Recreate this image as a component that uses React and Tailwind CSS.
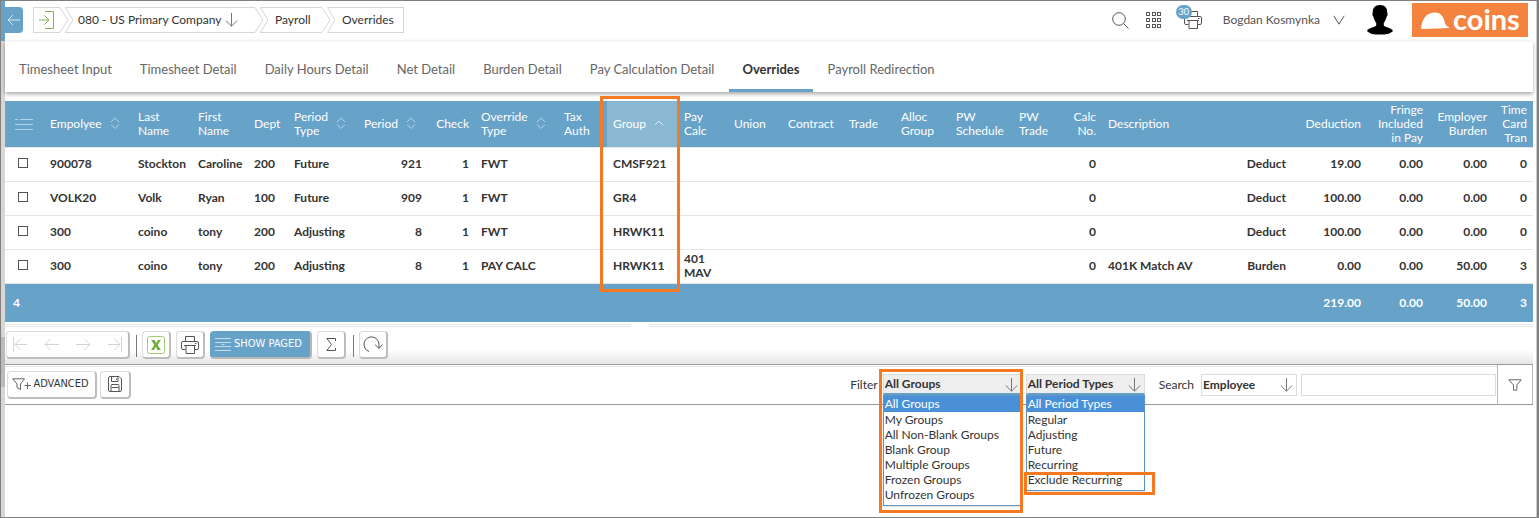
import React from "react";

const tabs = [
  "Timesheet Input",
  "Timesheet Detail",
  "Daily Hours Detail",
  "Net Detail",
  "Burden Detail",
  "Pay Calculation Detail",
  "Overrides",
  "Payroll Redirection",
];

const columns = [
  { key: "employee", label: "Empolyee", w: "w-[88px]", sort: "both" },
  { key: "last", label: "Last Name", w: "w-[60px]" },
  { key: "first", label: "First Name", w: "w-[56px]" },
  { key: "dept", label: "Dept", w: "w-[40px]" },
  { key: "periodType", label: "Period Type", w: "w-[70px]", sort: "both" },
  { key: "period", label: "Period", w: "w-[70px]", sort: "both", right: true },
  { key: "check", label: "Check", w: "w-[47px]", right: true },
  { key: "overrideType", label: "Override Type", w: "w-[83px]", sort: "both" },
  { key: "taxAuth", label: "Tax Auth", w: "w-[49px]" },
  { key: "group", label: "Group", w: "w-[71px]", sort: "up" },
  { key: "payCalc", label: "Pay Calc", w: "w-[50px]" },
  { key: "union", label: "Union", w: "w-[54px]" },
  { key: "contract", label: "Contract", w: "w-[61px]" },
  { key: "trade", label: "Trade", w: "w-[52px]" },
  { key: "alloc", label: "Alloc Group", w: "w-[55px]" },
  { key: "pwSchedule", label: "PW Schedule", w: "w-[63px]" },
  { key: "pwTrade", label: "PW Trade", w: "w-[53px]" },
  { key: "calcNo", label: "Calc No.", w: "w-[36px]", right: true },
  { key: "description", label: "Description", w: "" },
  { key: "kind", label: "", w: "w-[77px]", right: true },
  { key: "deduction", label: "Deduction", w: "w-[75px]", right: true },
  { key: "fringe", label: "Fringe Included in Pay", w: "w-[62px]", right: true },
  { key: "burden", label: "Employer Burden", w: "w-[64px]", right: true },
  { key: "tran", label: "Time Card Tran", w: "w-[40px]", right: true },
];

const rows = [
  { employee: "900078", last: "Stockton", first: "Caroline", dept: "200", periodType: "Future", period: "921", check: "1", overrideType: "FWT", group: "CMSF921", calcNo: "0", kind: "Deduct", deduction: "19.00", fringe: "0.00", burden: "0.00", tran: "0" },
  { employee: "VOLK20", last: "Volk", first: "Ryan", dept: "100", periodType: "Future", period: "909", check: "1", overrideType: "FWT", group: "GR4", calcNo: "0", kind: "Deduct", deduction: "100.00", fringe: "0.00", burden: "0.00", tran: "0" },
  { employee: "300", last: "coino", first: "tony", dept: "200", periodType: "Adjusting", period: "8", check: "1", overrideType: "FWT", group: "HRWK11", calcNo: "0", kind: "Deduct", deduction: "100.00", fringe: "0.00", burden: "0.00", tran: "0" },
  { employee: "300", last: "coino", first: "tony", dept: "200", periodType: "Adjusting", period: "8", check: "1", overrideType: "PAY CALC", group: "HRWK11", payCalc: "401 MAV", calcNo: "0", description: "401K Match AV", kind: "Burden", deduction: "0.00", fringe: "0.00", burden: "50.00", tran: "3" },
];

const groupOptions = ["All Groups", "My Groups", "All Non-Blank Groups", "Blank Group", "Multiple Groups", "Frozen Groups", "Unfrozen Groups"];
const periodOptions = ["All Period Types", "Regular", "Adjusting", "Future", "Recurring", "Exclude Recurring"];

function Icon({ w, h, children, className = "" }) {
  return (
    <svg width={w} height={h} viewBox={`0 0 ${w} ${h}`} fill="none" stroke="currentColor" strokeWidth="1" aria-hidden="true" className={`shrink-0 ${className}`}>
      {children}
    </svg>
  );
}

function Chevron() {
  return (
    <Icon w={13} h={26} className="text-[#d6d6d6]">
      <path d="M0 .5 8 13 0 25.5M13 .5H5.5L13 13 5.5 25.5H13" />
    </Icon>
  );
}

function DownArrow({ className = "" }) {
  return (
    <Icon w={13} h={14} className={className}>
      <path d="M6.5 0V13M.8 7.5 6.5 13.2 12.2 7.5" />
    </Icon>
  );
}

function SortIcon({ kind }) {
  return (
    <Icon w={10} h={12} className={kind === "both" ? "-mt-0.5 text-[#b5d4e5]" : "-mt-0.5 text-[#dcebf3]"}>
      {kind === "both" ? <path d="M1 5 5 1 9 5M1 7.5 5 11.5 9 7.5" /> : <path d="M1 8 5 4 9 8" />}
    </Icon>
  );
}

function Printer() {
  return (
    <Icon w={18} h={18}>
      <path d="M4.5 5V.5H13.5V5M4.5 13.5H2Q.5 13.500 .5 12V7Q.5 5.500 2 5.500H16Q17.500 5.500 17.500 7V12Q17.500 13.500 16 13.500H13.500M5 9.500H13.500V17.500H5ZM14 7.500H15.500M3 9.500H15" />
    </Icon>
  );
}

function ToolButton({ label, className = "", children, ...rest }) {
  return (
    <button
      type="button"
      aria-label={label}
      className={`flex h-7 items-center justify-center rounded border-t border-r-2 border-b-2 border-l border-[#bdbdbd] border-t-[#dcdcdc] border-l-[#dcdcdc] ${className}`}
      {...rest}
    >
      {children}
    </button>
  );
}

function FilterSelect({ label, options, width }) {
  return (
    <div className={`relative ${width}`}>
      <select aria-label={label} className="block h-[21px] w-full appearance-none border border-b-2 border-[#dcdcdc] border-b-[#67a2c8] bg-[#eeeeee] pl-px text-xs font-bold text-[#333]">
        {options.map((o) => (
          <option key={o}>{o}</option>
        ))}
      </select>
      <DownArrow className="pointer-events-none absolute top-1 right-1 text-[#777]" />
      <ul role="listbox" aria-label={`${label} options`} className="absolute top-[21px] left-0 z-10 w-full border border-[#5f93c5] bg-white pb-[3px] text-xs shadow">
        {options.map((o, i) => (
          <li key={o} role="option" aria-selected={i === 0} className={`pl-px whitespace-nowrap ${i === 0 ? "bg-[#4a90d9] leading-4 text-white" : "leading-[15px] text-[#333]"}`}>
            {o}
          </li>
        ))}
      </ul>
    </div>
  );
}

export default function App() {
  return (
    <div className="relative flex min-h-screen border border-r-2 border-[#808080] bg-white font-['Lato',sans-serif] text-xs text-[#333]">
      <div className="flex w-1 shrink-0 flex-col bg-[#d9d6d6]">
        <div className="h-10 bg-[#67a2c8]" />
        <div className="mt-[296px] h-[50px] bg-[#bbb]" />
      </div>

      <div className="min-w-0 flex-1 border-r border-[#ccc] pr-[3px]">
        <header className="flex h-10 items-center justify-between pr-[5px] pb-0.5">
          <nav aria-label="Breadcrumb" className="flex items-center">
            <button type="button" aria-label="Back" className="mr-[10px] flex h-[26px] w-[18px] items-center justify-center rounded-r bg-[#67a2c8] text-[#d5e8f3]">
              <Icon w={14} h={12}>
                <path d="M13 6H1M6 1 1 6 6 11" />
              </Icon>
            </button>
            <a href="#home" aria-label="Home" className="flex h-[26px] w-[27px] items-center justify-center border-y border-l border-[#d6d6d6] text-[#7fb24f]">
              <Icon w={16} h={18}>
                <path d="M6 .5H14.500V17.500H6M0 9H10M5.500 4.500 10 9 5.500 13.500" />
              </Icon>
            </a>
            <Chevron />
            <button type="button" className="flex h-[26px] w-[182px] items-center gap-1 border-y border-[#d6d6d6] pl-[5px]">
              080 - US Primary Company
              <DownArrow className="text-[#777]" />
            </button>
            <Chevron />
            <a href="#payroll" className="flex h-[26px] w-[54px] items-center border-y border-[#d6d6d6] pl-[7px]">Payroll</a>
            <Chevron />
            <a href="#overrides" className="flex h-[26px] items-center border-y border-r border-[#d6d6d6] pr-[9px] pl-[7px]">Overrides</a>
          </nav>

          <div className="flex items-center text-[#555]">
            <button type="button" aria-label="Search" className="mr-[17px]">
              <Icon w={17} h={17}>
                <circle cx="7" cy="7" r="6.300" />
                <path d="M11.500 11.500 16.500 16.500" />
              </Icon>
            </button>
            <button type="button" aria-label="Applications" className="mr-[22px]">
              <Icon w={16} h={17}>
                {[0.5, 6.5, 12.5].map((y) => [0.5, 6.5, 11.5].map((x) => <rect key={`${x}-${y}`} x={x} y={y} width="3" height="3" />))}
              </Icon>
            </button>
            <button type="button" aria-label="Print queue" className="relative mr-[21px]">
              <Printer />
              <span className="absolute -top-1.5 -left-2 flex h-3.5 w-4 items-center justify-center rounded-full bg-[#67a2c8] text-[9px] text-white">30</span>
            </button>
            <button type="button" className="mr-[22px] flex items-center gap-[13px]">
              Bogdan Kosmynka
              <Icon w={12} h={10}>
                <path d="M.8 .8 6 9.200 11.200 .8" />
              </Icon>
            </button>
            <svg width="26" height="30" viewBox="0 0 26 30" aria-hidden="true" className="mr-[19px]">
              <path d="M13 0C18 0 20.500 3 20.300 8 21 9 20.500 11 19.500 12 19 14.500 17.800 16.500 16.800 17.800V20.500C18.500 22.500 24.500 22.500 26 26 23 29 19 29.500 13 29.500S3 29 0 26C1.500 22.500 7.500 22.500 9.200 20.500V17.800C8.200 16.500 7 14.500 6.500 12 5.500 11 5 9 5.700 8 5.500 3 8 0 13 0Z" />
            </svg>
            <div className="flex h-[34px] w-[116px] items-center bg-[#f4833f] pl-[9px] text-white">
              <svg width="29" height="17" viewBox="0 0 29 17" fill="currentColor" aria-hidden="true">
                <path d="M0 17C1 6 6 1 13 .5 20 .2 23 5 24 11.500 25 13.500 27 15 29 16L8 16.800Z" />
              </svg>
              <span className="ml-[3px] pb-1 text-[29px] leading-none font-bold">coins</span>
            </div>
          </div>
        </header>

        <nav aria-label="Payroll sections" className="flex h-[51px] items-end gap-0.5 border-t border-[#f4f4f4] pl-px text-[13px] text-[#666] shadow-[0_2px_4px_rgba(0,0,0,0.35)]">
          {tabs.map((t) => (
            <a
              key={t}
              href="#tab"
              aria-current={t === "Overrides" ? "page" : undefined}
              className={`flex h-[42px] items-center border-b-[3px] px-[13px] ${t === "Overrides" ? "border-[#67a2c8] font-bold text-[#333]" : "border-transparent"}`}
            >
              {t}
            </a>
          ))}
        </nav>

        <main>
          <table className="mt-[9px] w-full table-fixed border-collapse text-xs">
            <colgroup>
              <col className="w-[39px]" />
              {columns.map((c) => (
                <col key={c.key} className={c.w} />
              ))}
            </colgroup>
            <thead>
              <tr className="h-[46px] border-b border-[#e2e6e8] bg-[#67a2c8] text-white">
                <th scope="col" aria-label="Select" className="pl-[10px]">
                  <Icon w={18} h={12} className="text-[#b5d3e4]">
                    <path d="M0 1.500H3M5 1.500H18M0 6.500H18M0 11.500H18" />
                  </Icon>
                </th>
                {columns.map((c) => (
                  <th key={c.key} scope="col" className={`px-1.5 font-normal ${c.right ? "text-right" : "text-left"} ${c.sort === "up" ? "bg-[#8ab7d1]" : ""}`}>
                    {c.sort ? (
                      <button type="button" className="flex items-center gap-2 text-left leading-[14px]">
                        <span className="w-min">{c.label}</span>
                        <SortIcon kind={c.sort} />
                      </button>
                    ) : (
                      <div className="leading-[14px]">{c.label}</div>
                    )}
                  </th>
                ))}
              </tr>
            </thead>
            <tbody>
              {rows.map((r, i) => (
                <tr key={i} className="h-[34px] border-b border-[#e4e4e4]">
                  <td className="pb-0.5 pl-[13px]">
                    <input type="checkbox" aria-label={`Select ${r.employee} row ${i + 1}`} className="block size-[10px] appearance-none border border-[#555] bg-white" />
                  </td>
                  {columns.map((c) => (
                    <td key={c.key} className={`px-1.5 pb-px leading-[14px] font-bold ${c.right ? "text-right" : ""} ${c.key === "payCalc" ? "" : "whitespace-nowrap"}`}>
                      {r[c.key]}
                    </td>
                  ))}
                </tr>
              ))}
            </tbody>
            <tfoot>
              <tr className="h-[39px] bg-[#67a2c8] font-bold text-white">
                <td className="pl-2">4</td>
                <td colSpan={20} />
                <td className="px-1.5 text-right">219.00</td>
                <td className="px-1.5 text-right">0.00</td>
                <td className="px-1.5 text-right">50.00</td>
                <td className="px-1.5 text-right">3</td>
              </tr>
            </tfoot>
          </table>

          <div className="relative mt-0.5 border-t border-[#e4e4e4] pt-px">
            <div className="absolute -top-[3px] left-[626px] h-[7px] w-[18px] rounded-full bg-white" />
            <div className="flex h-[39px] items-start border-t border-b border-[#e4e4e4] border-b-[#999] bg-linear-to-b from-white from-60% to-[#e6e6e6] pt-1 pl-px text-[#555]">
              <div className="mr-[6px] flex h-7 w-[124px] items-center justify-between rounded border-t border-r-2 border-b-2 border-l border-[#bdbdbd] border-t-[#dcdcdc] border-l-[#dcdcdc] bg-white px-[6px] text-[#d4d4d4]">
                {[
                  ["First page", "M.5 0V15M14 7.500H2M7.500 2 2 7.500 7.500 13"],
                  ["Previous page", "M15 7.500H1M6.500 2 1 7.500 6.500 13"],
                  ["Next page", "M0 7.500H14M8.500 2 14 7.500 8.500 13"],
                  ["Last page", "M14.500 0V15M1 7.500H13M7.500 2 13 7.500 7.500 13"],
                ].map(([name, d]) => (
                  <button key={name} type="button" disabled aria-label={name}>
                    <Icon w={15} h={15}>
                      <path d={d} />
                    </Icon>
                  </button>
                ))}
              </div>
              <div className="mt-1 mr-[5px] h-[22px] w-px bg-[#777]" />
              <ToolButton label="Export to Excel" className="mr-[5px] w-[29px] bg-white">
                <svg width="18" height="18" viewBox="0 0 18 18" fill="none" aria-hidden="true">
                  <rect x=".5" y=".5" width="17" height="17" rx="2" stroke="#9ccc72" />
                  <path d="M4.200 4H7.600L9.200 7.300 11 4H13.800L10.700 9 14 14H10.500L8.800 10.700 6.900 14H4L7.300 9Z" fill="#6fae3c" />
                </svg>
              </ToolButton>
              <ToolButton label="Print" className="mr-[5px] w-[29px] bg-white">
                <Printer />
              </ToolButton>
              <button type="button" className="mr-[5px] flex h-7 w-[102px] items-center gap-[3px] rounded border-r-2 border-b-2 border-[#b8b8b8] bg-[#67a2c8] pl-[5px] font-['DejaVu_Sans_Condensed','DejaVu_Sans',sans-serif] text-[11px] whitespace-nowrap text-white">
                <Icon w={16} h={13} className="text-[#c4dcea]">
                  <path d="M0 .5H16M0 4.500H16M0 8.500H16M0 12.500H16M6.500 6.500H9.500" />
                </Icon>
                SHOW PAGED
              </button>
              <ToolButton label="Totals" className="mr-[7px] w-[29px] bg-white">
                <Icon w={10} h={13}>
                  <path d="M9.500 3V.5H.8L5.500 6.500 .8 12.500H9.500V10" />
                </Icon>
              </ToolButton>
              <div className="mt-1 mr-[5px] h-[22px] w-px bg-[#777]" />
              <ToolButton label="Refresh" className="w-[29px] bg-white">
                <Icon w={20} h={17}>
                  <path d="M6 15.500A7.500 7.500 0 1 1 16 8.500V12M12 8.500 16 12.500 19.500 8.500" />
                </Icon>
              </ToolButton>
            </div>
          </div>

          <div className="flex h-10 items-stretch border-b border-[#999]">
            <div className="mt-px flex flex-1 items-center border-t border-[#e4e4e4] pr-px pb-0.5 pl-0.5">
              <ToolButton className="mr-[3px] w-[90px] gap-0.5 bg-white pr-0.5 font-['DejaVu_Sans_Condensed','DejaVu_Sans',sans-serif] text-[11px]">
                <Icon w={19} h={12} className="text-[#666]">
                  <path d="M.8 .8H12.500L8.500 6V11.500L5 9.500V6ZM12.500 7.500H19M15.500 4.500V11" />
                </Icon>
                ADVANCED
              </ToolButton>
              <ToolButton label="Save filter" className="w-[31px] bg-white text-[#555]">
                <Icon w={14} h={16}>
                  <path d="M.5 2Q.5 .5 2 .5H11L13.500 3V14Q13.500 15.500 12 15.500H2Q.5 15.500 .5 14ZM3.500 1V5.500H10V1M8.500 2.500V4M3 15V9.500Q3 8.500 4 8.500H10Q11 8.500 11 9.500V15M3.500 11.500H10.500" />
                </Icon>
              </ToolButton>
              <div className="ml-auto flex items-center">
                <span className="mr-[5px]">Filter</span>
                <div className="mr-[3px] flex gap-1">
                  <FilterSelect label="Group filter" options={groupOptions} width="w-[139px]" />
                  <FilterSelect label="Period type filter" options={periodOptions} width="w-[119px]" />
                </div>
                <label htmlFor="search-field" className="mr-[7px] ml-[11px]">Search</label>
                <div className="relative mr-1">
                  <select id="search-field" className="block h-[22px] w-24 appearance-none border border-[#dcdcdc] bg-white pl-px text-xs font-bold text-[#333]">
                    <option>Employee</option>
                  </select>
                  <DownArrow className="pointer-events-none absolute top-1 right-1 text-[#777]" />
                </div>
                <input type="text" aria-label="Search text" className="h-[22px] w-[195px] border border-[#dcdcdc] bg-white px-1" />
              </div>
            </div>
            <button type="button" aria-label="Apply filter" className="flex w-9 items-center justify-center border-x border-[#bbb] text-[#666]">
              <Icon w={14} h={12}>
                <path d="M.8 .8H13.200L8.800 6V11.200H5.500V6Z" />
              </Icon>
            </button>
          </div>
        </main>
      </div>

      <div className="pointer-events-none absolute top-[95px] left-[599px] h-[196px] w-[80px] border-[3px] border-[#f47920]" />
      <div className="pointer-events-none absolute top-[368px] right-[514px] z-20 h-[144px] w-[144px] border-[3px] border-[#f47920]" />
      <div className="pointer-events-none absolute top-[471px] right-[382px] z-20 h-[23px] w-[131px] border-[3px] border-[#f47920]" />
    </div>
  );
}
